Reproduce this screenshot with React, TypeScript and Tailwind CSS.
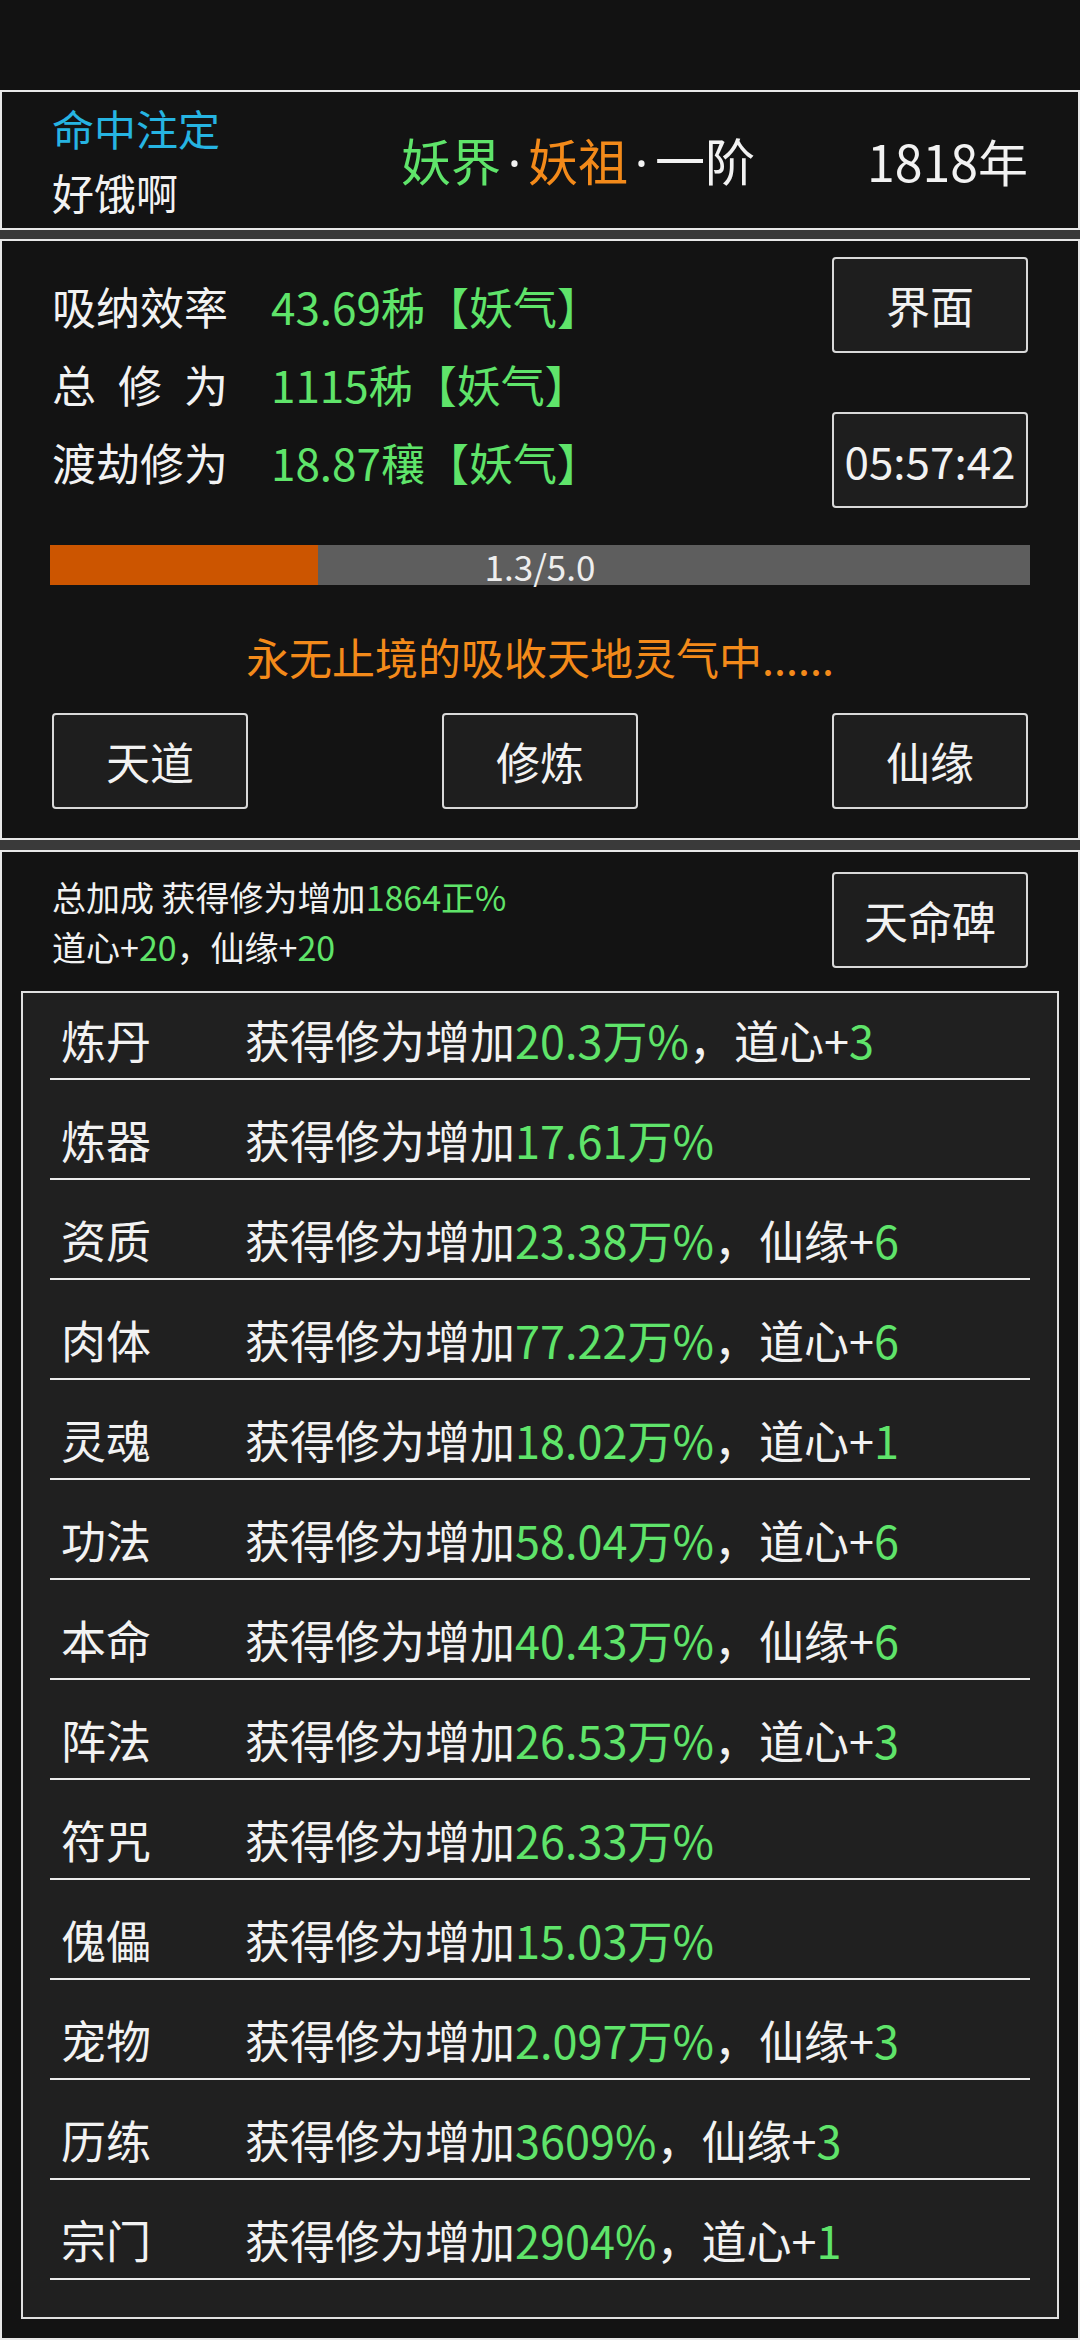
import React from "react";

const G = ({ children }: { children: React.ReactNode }) => (
  <span className="text-[#5fe46a]">{children}</span>
);

type Row = { name: string; val: string; extra?: [string, string] };

const rows: Row[] = [
  { name: "炼丹", val: "20.3万%", extra: ["道心", "3"] },
  { name: "炼器", val: "17.61万%" },
  { name: "资质", val: "23.38万%", extra: ["仙缘", "6"] },
  { name: "肉体", val: "77.22万%", extra: ["道心", "6"] },
  { name: "灵魂", val: "18.02万%", extra: ["道心", "1"] },
  { name: "功法", val: "58.04万%", extra: ["道心", "6"] },
  { name: "本命", val: "40.43万%", extra: ["仙缘", "6"] },
  { name: "阵法", val: "26.53万%", extra: ["道心", "3"] },
  { name: "符咒", val: "26.33万%" },
  { name: "傀儡", val: "15.03万%" },
  { name: "宠物", val: "2.097万%", extra: ["仙缘", "3"] },
  { name: "历练", val: "3609%", extra: ["仙缘", "3"] },
  { name: "宗门", val: "2904%", extra: ["道心", "1"] },
];

const Btn = ({ children, className = "" }: { children: React.ReactNode; className?: string }) => (
  <div
    className={
      "w-[196px] h-[96px] border-2 border-[#d9d9d9] rounded-[4px] bg-[#1e1e1e] flex items-center justify-center text-[44px] text-[#f2f2f2] " +
      className
    }
  >
    {children}
  </div>
);

const Dot = () => <span className="inline-block w-[27px] text-center font-['Noto_Sans',sans-serif]">·</span>;

export default function App() {
  return (
    <div className="w-[1080px] min-h-[2340px] bg-[#121212] text-[#f2f2f2] font-['Noto_Sans_CJK_SC','Noto_Sans',sans-serif] flex flex-col">
      <div className="h-[90px]" />

      {/* Panel 1 */}
      <div className="h-[140px] border-2 border-[#e8e8e8] bg-[#131313] px-[50px] flex items-center">
        <div className="w-[349px] flex flex-col text-[42px] leading-[64px]">
          <div className="text-[#26b4e2]">命中注定</div>
          <div>好饿啊</div>
        </div>
        <div className="text-[50px] leading-[64px] whitespace-nowrap">
          <span className="text-[#5fe46a]">妖界</span>
          <Dot />
          <span className="text-[#f38a1a]">妖祖</span>
          <Dot />
          <span>一阶</span>
        </div>
        <div className="flex-1" />
        <div className="text-[50px] leading-[64px]">1818年</div>
      </div>

      <div className="h-[9px] bg-[#3a3a3a]" />

      {/* Panel 2 */}
      <div className="h-[601px] border-2 border-[#e8e8e8] bg-[#131313] px-[50px] flex flex-col">
        <div className="flex justify-between">
          <div className="pt-[26px] flex flex-col text-[44px]">
            {[
              ["吸纳效率", "43.69秭【妖气】"],
              ["总修为", "1115秭【妖气】"],
              ["渡劫修为", "18.87穰【妖气】"],
            ].map(([l, v]) => (
              <div key={l} className="h-[78px] flex items-center">
                <div className="w-[219px]">
                  <div className="w-[176px] flex justify-between">
                    {l.split("").map((c, i) => (
                      <span key={i}>{c}</span>
                    ))}
                  </div>
                </div>
                <span className="text-[#5fe46a]">{v}</span>
              </div>
            ))}
          </div>
          <div className="pt-[16px] flex flex-col gap-[59px]">
            <Btn>界面</Btn>
            <Btn>05:57:42</Btn>
          </div>
        </div>

        <div className="mt-[37px] -mx-[2px] h-[40px] bg-[#5e5e5e] relative">
          <div className="h-full w-[27.3%] bg-[#cc5500]" />
          <div className="absolute inset-0 flex items-center justify-center pt-[3px] text-[35px] text-[#eeeeee]">
            1.3/5.0
          </div>
        </div>

        <div className="mt-[41px] text-center text-[43px] leading-[60px] text-[#f38a1a]">
          永无止境的吸收天地灵气中......
        </div>

        <div className="mt-[27px] flex justify-between">
          <Btn>天道</Btn>
          <Btn>修炼</Btn>
          <Btn>仙缘</Btn>
        </div>
      </div>

      <div className="h-[10px] bg-[#3a3a3a]" />

      {/* Panel 3 */}
      <div className="h-[1490px] border-2 border-[#e8e8e8] bg-[#131313] flex flex-col">
        <div className="pt-[20px] px-[50px] flex justify-between">
          <div className="text-[34px] leading-[50px]">
            <div>
              总加成 获得修为增加<G>1864正%</G>
            </div>
            <div>
              道心+<G>20</G>，仙缘+<G>20</G>
            </div>
          </div>
          <Btn>天命碑</Btn>
        </div>

        <div className="mt-[19px] mx-[19px] border-2 border-[#e0e0e0] bg-[#202020] pt-[9px] pb-[37px] px-[27px] flex flex-col gap-[22px]">
          {rows.map((r) => (
            <div key={r.name} className="flex flex-col">
              <div className="h-[76px] flex items-center pl-[11px] text-[45px] whitespace-nowrap">
                <div className="w-[184px]">{r.name}</div>
                <div>
                  获得修为增加<G>{r.val}</G>
                  {r.extra && (
                    <>
                      ，{r.extra[0]}+<G>{r.extra[1]}</G>
                    </>
                  )}
                </div>
              </div>
              <div className="h-[2px] bg-[#ececec]" />
            </div>
          ))}
        </div>
      </div>
    </div>
  );
}
